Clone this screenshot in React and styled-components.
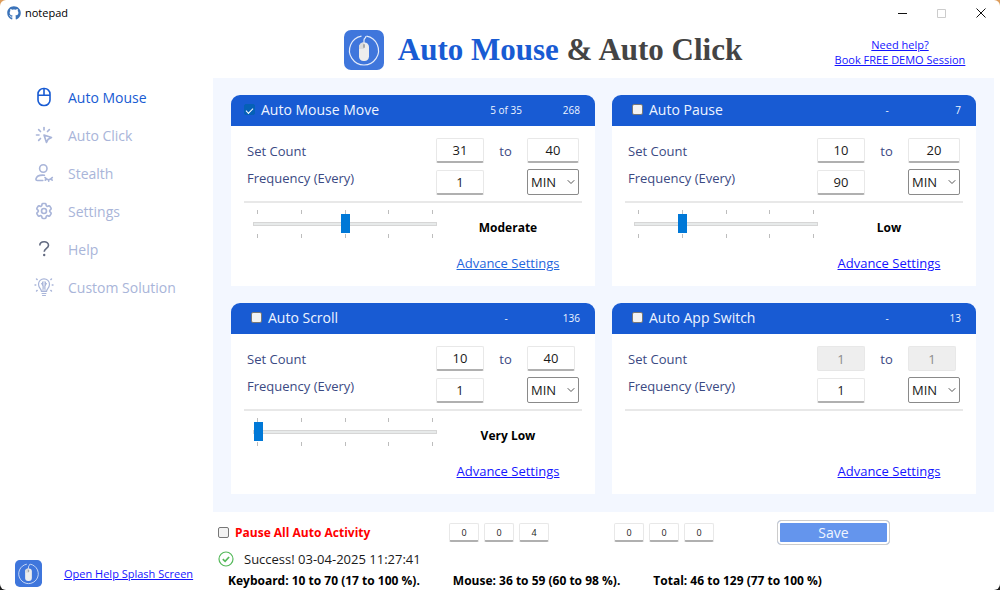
import React, { useState } from 'react'
import styled, { createGlobalStyle } from 'styled-components'
import { FaGithub } from 'react-icons/fa'
import { TbClick } from 'react-icons/tb'
import { HiOutlineCog6Tooth } from 'react-icons/hi2'
import { ChevronDown } from 'lucide-react'


const GlobalStyle = createGlobalStyle`
  * {
    box-sizing: border-box;
  }
  body {
    margin: 0;
    background: linear-gradient(#dd9d5c 50%, #1c1c1c 50%);
    font-family: 'Open Sans', 'Noto Sans', sans-serif;
    font-size: 13px;
    color: #1a1a1a;
  }
  input, select, button {
    font-family: inherit;
    margin: 0;
  }
`

const Window = styled.div`
  display: flex;
  flex-direction: column;
  min-height: 100vh;
  background: #ffffff;
  border-radius: 6px;
`

const TitleBar = styled.div`
  display: flex;
  align-items: center;
  height: 25px;
  padding-left: 7px;
  font-size: 11px;
  color: #000000;
`

const AppName = styled.span`
  flex: 1;
  margin-left: 4px;
`

const WindowButton = styled.button`
  display: flex;
  align-items: center;
  justify-content: center;
  width: 39px;
  height: 25px;
  padding: 0;
  border: none;
  background: none;
`

const Header = styled.header`
  display: flex;
  align-items: center;
  height: 53px;
  padding-left: 286px;
`

const Brand = styled.div`
  display: flex;
  flex: 1;
  align-items: center;
  justify-content: center;
  gap: 14px;
  padding-bottom: 4px;
`

const Title = styled.h1`
  margin: 0;
  font-family: 'Liberation Serif', serif;
  font-size: 31px;
  font-weight: 700;
  line-height: 40px;
  white-space: nowrap;
  color: #444444;
`

const TitleBlue = styled.span`
  color: #185bd3;
`

const HelpLinks = styled.div`
  display: flex;
  flex-direction: column;
  align-items: center;
  width: 200px;
`

const Link = styled.a`
  font-size: ${(p) => (p.$small ? '11px' : '13px')};
  line-height: ${(p) => (p.$small ? '15px' : '20px')};
  color: ${(p) => (p.$active ? '#1f66dd' : '#1414ff')};
  text-decoration: underline;
`

const Content = styled.div`
  display: flex;
  flex: 1;
`

const Sidebar = styled.aside`
  display: flex;
  flex-direction: column;
  width: 213px;
`

const Nav = styled.nav`
  display: flex;
  flex: 1;
  flex-direction: column;
`

const NavItem = styled.a`
  display: flex;
  align-items: center;
  gap: 14px;
  height: 38px;
  padding-left: 34px;
  font-size: 14px;
  color: ${(p) => (p.$active ? '#185bd3' : '#a9b5d9')};
  text-decoration: none;
`

const SideFooter = styled.div`
  display: flex;
  align-items: center;
  gap: 22px;
  padding: 0 0 3px 15px;
`

const Main = styled.main`
  flex: 1;
  padding-right: 6px;
`

const Panel = styled.section`
  display: grid;
  grid-template-columns: 1fr 1fr;
  gap: 17px;
  padding: 17px 18px 18px;
  background: #f3f7ff;
`

const CardBox = styled.article`
  background: #ffffff;
  border-radius: 9px 9px 0 0;
`

const CardHeader = styled.div`
  display: grid;
  grid-template-columns: 1fr 60px 44px;
  align-items: center;
  height: 31px;
  padding: 0 15px 2px ${(p) => (p.$active ? '13px' : '20px')};
  border-radius: 9px 9px 0 0;
  background: #185bd3;
  color: #eef4ff;
`

const CardTitle = styled.label`
  display: flex;
  align-items: center;
  gap: 6px;
  font-size: 14px;
  line-height: 20px;
`

const HeaderValue = styled.span`
  font-size: 10px;
  text-align: ${(p) => p.$align};
`

const CheckBox = styled.input`
  appearance: none;
  display: grid;
  place-items: center;
  width: 11px;
  height: 11px;
  border: 1px solid #777777;
  border-radius: 2px;
  background: #f3f3f3;

  &:checked {
    border-color: #0560b6;
    background: #0560b6;
  }
  &:checked::after {
    content: '';
    width: 6px;
    height: 3px;
    border-left: 1px solid #ffffff;
    border-bottom: 1px solid #ffffff;
    transform: rotate(-45deg);
  }
`

const Fields = styled.div`
  display: grid;
  grid-template-columns: 1fr 48px 43px 52px;
  grid-template-rows: 25px 26px;
  row-gap: 6px;
  align-items: center;
  padding: 12px 16px 6px;
`

const FieldLabel = styled.label`
  align-self: start;
  line-height: ${(p) => (p.$row === 'count' ? '26px' : '18px')};
  color: #3b4a83;
`

const ToLabel = styled.span`
  text-align: center;
  color: #3b4a83;
`

const NumberInput = styled.input`
  width: ${(p) => (p.$wide ? '52px' : '48px')};
  height: 25px;
  padding: 0;
  border: 1px solid #e8e8e8;
  border-bottom: 2px solid #b0b0b0;
  border-radius: 2px;
  background: #ffffff;
  font-size: 13px;
  text-align: center;
  color: #1a1a1a;

  &:disabled {
    border-bottom: 1px solid #e6e6e6;
    background: #eeeeee;
    color: #8c8c8c;
  }
`

const SelectBox = styled.div`
  display: grid;
  grid-column: 4;
  align-items: center;

  & > * {
    grid-area: 1 / 1;
  }
  svg {
    justify-self: end;
    margin-right: 2px;
    color: #555555;
    pointer-events: none;
  }
`

const Select = styled.select`
  appearance: none;
  width: 100%;
  height: 26px;
  padding: 0 0 0 3px;
  border: 1px solid #8a8a8a;
  border-radius: 2px;
  background: #ffffff;
  font-size: 13px;
  color: #1a1a1a;
`

const Divider = styled.hr`
  height: 2px;
  margin: 0 13px;
  border: none;
  background: #e8e8e8;
`

const CardBottom = styled.div`
  display: grid;
  grid-template-columns: 1fr 142px;
  height: 83px;
  padding: 0 16px;
`

const SliderBox = styled.div`
  padding: 7px 0 0 6px;
`

const Ticks = styled.div`
  display: flex;
  justify-content: space-between;
  padding: 0 4px;
`

const Tick = styled.span`
  width: 1px;
  height: 4px;
  background: #bdbdbd;
`

const Range = styled.input`
  appearance: none;
  display: block;
  width: 100%;
  height: 20px;
  background: none;

  &::-webkit-slider-runnable-track {
    height: 4px;
    border: 1px solid #d6d6d6;
    background: #e7eaea;
  }
  &::-webkit-slider-thumb {
    appearance: none;
    width: 9px;
    height: 19px;
    margin-top: -9px;
    background: #0078d7;
  }
`

const Readout = styled.div`
  display: flex;
  flex-direction: column;
  grid-column: 2;
  align-items: center;
  justify-content: flex-end;
  gap: 15px;
  padding-bottom: 13px;
`

const Level = styled.span`
  font-size: 12px;
  font-weight: 700;
  line-height: 20px;
  color: #000000;
`

const Footer = styled.footer`
  padding-left: 5px;
`

const ControlRow = styled.div`
  display: grid;
  grid-template-columns: 231fr 165fr 163fr 217fr;
  align-items: center;
  height: 35px;
  padding-top: 6px;
`

const PauseLabel = styled.label`
  display: flex;
  align-items: center;
  gap: 6px;
  font-size: 12px;
  font-weight: 700;
  color: #ff0000;
`

const TimeGroup = styled.div`
  display: flex;
  gap: 5px;
`

const TimeInput = styled(NumberInput)`
  width: 30px;
  height: 19px;
  font-size: 9px;
`

const SaveButton = styled.button`
  width: 113px;
  height: 25px;
  padding: 0;
  border: 1px solid #cccccc;
  border-radius: 4px;
  background: #6495ed;
  box-shadow: inset 0 0 0 2px #ffffff;
  font-size: 14px;
  line-height: 22px;
  color: #f0f5ff;
`

const StatusRow = styled.div`
  display: flex;
  align-items: center;
  gap: 10px;
  height: 24px;
`

const StatsRow = styled.div`
  display: flex;
  gap: 33px;
  padding-left: 10px;
  font-size: 12px;
  font-weight: 700;
  line-height: 19px;
  color: #000000;
`


const Logo = ({ size }) => (
  <svg width={size} height={size} viewBox="0 0 40 40" fill="none">
    <rect width="40" height="40" rx="7" fill="#3f76dc" />
    <path d="M17.5 6.200a14.500 14.500 0 1 0 5 0" stroke="#e3ebfa" strokeWidth="1.200" />
    <path d="M20 13v-3c0-2 2-1.500 2-4" stroke="#e3ebfa" strokeWidth="1.200" />
    <rect x="15" y="12.500" width="10" height="18.500" rx="4.500" fill="#ededed" />
    <path d="M15 19v-2a4.500 4.500 0 0 1 5-4.500V19z" fill="#dcdcdc" />
    <rect x="19" y="14" width="2" height="4" rx="1" fill="#a9a9a9" />
  </svg>
)

const MouseIcon = () => (
  <svg width="20" height="20" viewBox="0 0 20 20" fill="none" stroke="currentColor" strokeWidth="1.600">
    <rect x="4" y="1.500" width="12" height="17" rx="5.500" />
    <path d="M4 8.200h12M10 1.500v6.700" />
  </svg>
)

const StealthIcon = () => (
  <svg width="20" height="20" viewBox="0 0 20 20" fill="none" stroke="currentColor" strokeWidth="1.600" strokeLinecap="round">
    <circle cx="9.300" cy="5.500" r="3.700" />
    <path d="M8.800 17.500H3.500c-1.300 0-1.700-.8-1.500-1.700.6-2.400 3.100-3.700 6.500-3.700.7 0 1.300 0 1.900.2" />
    <path d="M11 14.500c1.800 2.900 5.300 2.900 7.300 0M12 16l-.8 1.200M14.700 16.800v1.400M17.300 16l.9 1.200" />
  </svg>
)

const HelpIcon = () => (
  <svg width="20" height="20" viewBox="0 0 20 20" fill="none" stroke="#626a80" strokeWidth="1.600">
    <path d="M5.800 6.500c0-5 8.700-5 8.700-.3 0 3.200-4.300 3-4.300 6.600" />
    <circle cx="10.200" cy="16" r="1.200" fill="#626a80" stroke="none" />
  </svg>
)

const BulbIcon = () => (
  <svg width="20" height="20" viewBox="0 0 20 20" fill="none" stroke="currentColor" strokeWidth="1.200" strokeLinecap="round">
    <path d="M7.500 14.500c0-2.500-3-3.500-3-7.200a5.500 5.500 0 0 1 11 0c0 3.700-3 4.700-3 7.200z" />
    <path d="M8 16.500h4M8.500 18.500h3M9 14V9L7.500 6.500M11 14V9l1.500-2.500M10 4.500v7M8.500 5v3M11.500 5v3" strokeWidth="1" />
    <path d="M1 8h.8M18.200 8h.8M2.500 2l.7.6M17.500 2l-.7.6M2.500 14l.7-.6M17.500 14l-.7-.6" strokeWidth="1.400" />
  </svg>
)

const SuccessIcon = () => (
  <svg width="16" height="16" viewBox="0 0 16 16" fill="none" stroke="#55b95a">
    <circle cx="8" cy="8" r="7" strokeWidth="1.200" />
    <path d="M4.800 8.200l2.300 2.200 4-4.400" strokeWidth="1.700" />
  </svg>
)


const navItems = [
  { name: 'Auto Mouse', icon: <MouseIcon />, active: true },
  { name: 'Auto Click', icon: <TbClick size={20} /> },
  { name: 'Stealth', icon: <StealthIcon /> },
  { name: 'Settings', icon: <HiOutlineCog6Tooth size={20} strokeWidth={2} /> },
  { name: 'Help', icon: <HelpIcon /> },
  { name: 'Custom Solution', icon: <BulbIcon /> },
]

const cards = [
  { id: 'move', name: 'Auto Mouse Move', active: true, progress: '5 of 35', total: 268, from: 31, to: 40, every: 1, speed: 2, wide: true },
  { id: 'pause', name: 'Auto Pause', progress: '-', total: 7, from: 10, to: 20, every: 90, speed: 1, wide: true },
  { id: 'scroll', name: 'Auto Scroll', progress: '-', total: 136, from: 10, to: 40, every: 1, speed: 0 },
  { id: 'switch', name: 'Auto App Switch', progress: '-', total: 13, from: 1, to: 1, every: 1, locked: true },
]

const levels = ['Very Low', 'Low', 'Moderate', 'High', 'Very High']


const Card = ({ card }) => {
  const [speed, setSpeed] = useState(card.speed)
  const hasSlider = speed !== undefined

  return (
    <CardBox>
      <CardHeader $active={card.active}>
        <CardTitle>
          <CheckBox type="checkbox" defaultChecked={card.active} />
          {card.name}
        </CardTitle>
        <HeaderValue $align="center">{card.progress}</HeaderValue>
        <HeaderValue $align="right">{card.total}</HeaderValue>
      </CardHeader>
      <Fields>
        <FieldLabel $row="count" htmlFor={card.id + '-from'}>Set Count</FieldLabel>
        <NumberInput id={card.id + '-from'} defaultValue={card.from} disabled={card.locked} />
        <ToLabel>to</ToLabel>
        <NumberInput aria-label="Set Count to" $wide={card.wide} defaultValue={card.to} disabled={card.locked} />
        <FieldLabel htmlFor={card.id + '-every'}>Frequency (Every)</FieldLabel>
        <NumberInput id={card.id + '-every'} defaultValue={card.every} />
        <SelectBox>
          <Select aria-label="Frequency unit" defaultValue="MIN">
            <option>SEC</option>
            <option>MIN</option>
          </Select>
          <ChevronDown size={12} />
        </SelectBox>
      </Fields>
      <Divider />
      <CardBottom>
        {hasSlider && (
          <SliderBox>
            <Ticks>{levels.map((l) => <Tick key={l} />)}</Ticks>
            <Range type="range" min="0" max="4" aria-label={card.name + ' level'} value={speed} onChange={(e) => setSpeed(Number(e.target.value))} />
            <Ticks>{levels.map((l) => <Tick key={l} />)}</Ticks>
          </SliderBox>
        )}
        <Readout>
          {hasSlider && <Level>{levels[speed]}</Level>}
          <Link href="#advance" $active={card.active}>Advance Settings</Link>
        </Readout>
      </CardBottom>
    </CardBox>
  )
}


export default function App() {
  return (
    <>
      <GlobalStyle />
      <Window>
        <TitleBar>
          <FaGithub size={14} color="#3b73b9" />
          <AppName>notepad</AppName>
          <WindowButton aria-label="Minimize">
            <svg width="10" height="10" stroke="#111111"><path d="M0 5.500h9" /></svg>
          </WindowButton>
          <WindowButton aria-label="Maximize">
            <svg width="10" height="10" fill="none" stroke="#cccccc"><path d="M.5 1.500h8v8h-8z" /></svg>
          </WindowButton>
          <WindowButton aria-label="Close">
            <svg width="10" height="10" stroke="#111111"><path d="M.5.5l9 9M9.500.5l-9 9" /></svg>
          </WindowButton>
        </TitleBar>
        <Header>
          <Brand>
            <Logo size={40} />
            <Title><TitleBlue>Auto Mouse</TitleBlue> &amp; Auto Click</Title>
          </Brand>
          <HelpLinks>
            <Link $small href="#help">Need help?</Link>
            <Link $small href="#demo">Book FREE DEMO Session</Link>
          </HelpLinks>
        </Header>
        <Content>
          <Sidebar>
            <Nav>
              {navItems.map((item) => (
                <NavItem key={item.name} href="#nav" $active={item.active}>
                  {item.icon}
                  {item.name}
                </NavItem>
              ))}
            </Nav>
            <SideFooter>
              <Logo size={27} />
              <Link $small href="#splash">Open Help Splash Screen</Link>
            </SideFooter>
          </Sidebar>
          <Main>
            <Panel>
              {cards.map((card) => <Card key={card.id} card={card} />)}
            </Panel>
            <Footer>
              <ControlRow>
                <PauseLabel>
                  <CheckBox type="checkbox" />
                  Pause All Auto Activity
                </PauseLabel>
                <TimeGroup>
                  <TimeInput aria-label="Elapsed hours" defaultValue="0" />
                  <TimeInput aria-label="Elapsed minutes" defaultValue="0" />
                  <TimeInput aria-label="Elapsed seconds" defaultValue="4" />
                </TimeGroup>
                <TimeGroup>
                  <TimeInput aria-label="Idle hours" defaultValue="0" />
                  <TimeInput aria-label="Idle minutes" defaultValue="0" />
                  <TimeInput aria-label="Idle seconds" defaultValue="0" />
                </TimeGroup>
                <SaveButton>Save</SaveButton>
              </ControlRow>
              <StatusRow>
                <SuccessIcon />
                <span>Success! 03-04-2025 11:27:41</span>
              </StatusRow>
              <StatsRow>
                <span>Keyboard: 10 to 70 (17 to 100 %).</span>
                <span>Mouse: 36 to 59 (60 to 98 %).</span>
                <span>Total: 46 to 129 (77 to 100 %)</span>
              </StatsRow>
            </Footer>
          </Main>
        </Content>
      </Window>
    </>
  )
}
